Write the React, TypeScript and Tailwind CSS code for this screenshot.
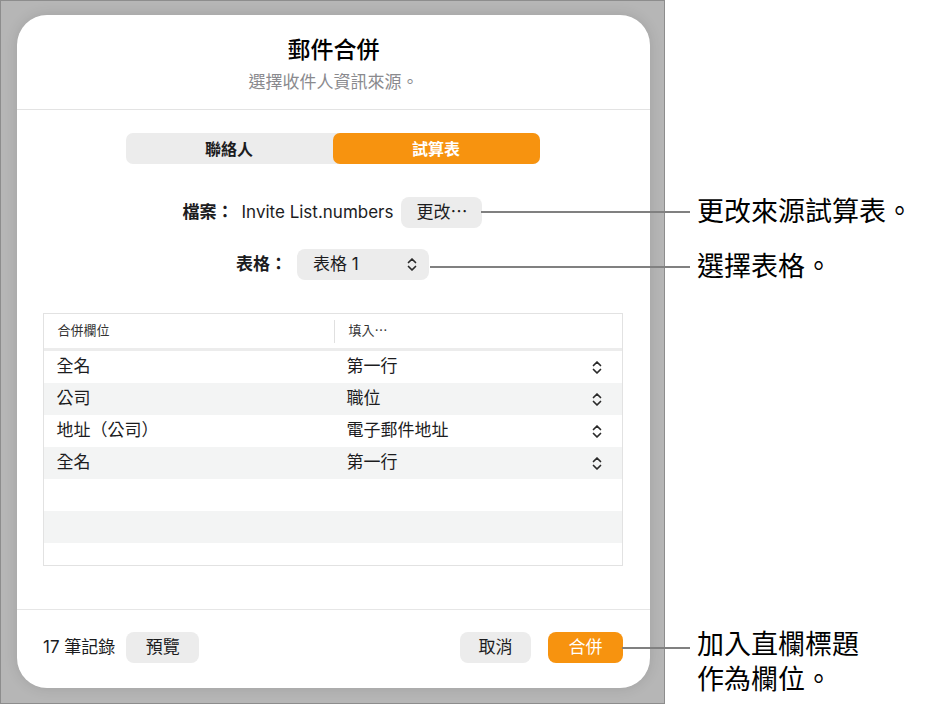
import React from "react";

const FONT = 'Inter, "Noto Sans CJK TC", "Noto Sans", sans-serif';

function UpDown({ className = "" }: { className?: string }) {
  return (
    <svg width="10" height="15" viewBox="0 0 10 15" fill="none" className={className}>
      <path d="M1.5 5.5 L5 2 L8.5 5.5" stroke="#2a2a2a" strokeWidth="1.7" strokeLinecap="round" strokeLinejoin="round" />
      <path d="M1.5 9.5 L5 13 L8.5 9.5" stroke="#2a2a2a" strokeWidth="1.7" strokeLinecap="round" strokeLinejoin="round" />
    </svg>
  );
}

const rows = [
  { field: "全名", value: "第一行" },
  { field: "公司", value: "職位" },
  { field: "地址（公司）", value: "電子郵件地址" },
  { field: "全名", value: "第一行" },
  { field: "", value: "" },
  { field: "", value: "" },
];

export default function App() {
  return (
    <div className="relative flex w-[926px] h-[705px] bg-white text-[#1c1c1e]" style={{ fontFamily: FONT }}>
      {/* grey frame around the sheet */}
      <div className="w-[665px] h-[704px] shrink-0 border border-[#8d8d8d] bg-[#b6b6b6] pt-[14px] pl-[16px] pr-[15px] pb-[15px]">
        <div className="flex flex-col w-[633px] h-[673px] rounded-[30px] bg-white shadow-[0_0_14px_rgba(0,0,0,0.12)]">
          <div className="flex flex-col items-center pt-[19px] pb-[15px] border-b border-[#e3e3e3]">
            <h1 className="text-[23px] leading-[32px] font-medium text-black">郵件合併</h1>
            <p className="mt-[4px] text-[17px] leading-[24px] text-[#8a8a8e]">選擇收件人資訊來源。</p>
          </div>

          <div className="flex flex-col items-center pt-[23px] pl-[25px] pr-[27px]">
            <div className="flex w-[414px] h-[31px] rounded-[7px] bg-[#ececec] text-[16px] font-semibold">
              <div className="flex-1 flex items-center justify-center text-[#1c1c1e]">聯絡人</div>
              <div className="flex-1 flex items-center justify-center rounded-[7px] bg-[#f7930f] text-white">試算表</div>
            </div>

            <div className="flex items-center mt-[33px] h-[31px] text-[17px]">
              <span className="font-semibold">檔案：</span>
              <span className="ml-[8px]">Invite List.numbers</span>
              <button className="ml-[8px] h-[31px] px-[15px] rounded-[8px] bg-[#ececec] text-[17px]">更改⋯</button>
            </div>

            <div className="flex items-center mt-[21px] h-[31px] text-[17px]">
              <span className="font-semibold">表格：</span>
              <div className="ml-[10px] flex items-center justify-between w-[132px] h-[31px] pl-[16px] pr-[12px] rounded-[8px] bg-[#ececec]">
                <span>表格 1</span>
                <UpDown />
              </div>
            </div>

            <div className="mt-[33px] w-[580px] h-[253px] border border-[#e2e2e2] overflow-hidden">
              <div className="flex items-center h-[37px] border-b-[3px] border-[#ececec] text-[13px] text-[#333]">
                <div className="w-[290px] pl-[14px]">合併欄位</div>
                <div className="h-[23px] w-px bg-[#e0e0e0]" />
                <div className="pl-[14px]">填入⋯</div>
              </div>
              {rows.map((r, i) => (
                <div
                  key={i}
                  className={`flex items-center h-[32px] text-[17px] ${i % 2 === 1 ? "bg-[#f3f4f4]" : "bg-white"}`}
                >
                  <div className="w-[290px] pl-[13px]">{r.field}</div>
                  <div className="flex-1 pl-[13px]">{r.value}</div>
                  {r.value && <UpDown className="mr-[20px]" />}
                </div>
              ))}
            </div>
          </div>

          <div className="mt-auto flex items-center justify-between h-[79px] pl-[26px] pr-[27px] pb-[3px] border-t border-[#e6e6e6] text-[17px]">
            <div className="flex items-center">
              <span>17 筆記錄</span>
              <button className="ml-[11px] h-[31px] w-[73px] rounded-[8px] bg-[#ececec]">預覽</button>
            </div>
            <div className="flex items-center">
              <button className="h-[31px] w-[71px] rounded-[8px] bg-[#ececec]">取消</button>
              <button className="ml-[17px] h-[31px] w-[75px] rounded-[8px] bg-[#f7930f] text-white">合併</button>
            </div>
          </div>
        </div>
      </div>

      {/* callout labels */}
      <div className="flex flex-col pl-[32px] pt-[194px] text-[27px] leading-[36px] text-black">
        <p>更改來源試算表。</p>
        <p className="mt-[19px]">選擇表格。</p>
        <p className="mt-[342px] leading-[35px]">
          加入直欄標題
          <br />
          作為欄位。
        </p>
      </div>

      {/* leader lines */}
      <div className="absolute left-[481px] top-[211px] w-[209px] h-[2px] bg-[#808080]" />
      <div className="absolute left-[430px] top-[266px] w-[260px] h-[2px] bg-[#808080]" />
      <div className="absolute left-[622px] top-[647px] w-[68px] h-[2px] bg-[#808080]" />
    </div>
  );
}
